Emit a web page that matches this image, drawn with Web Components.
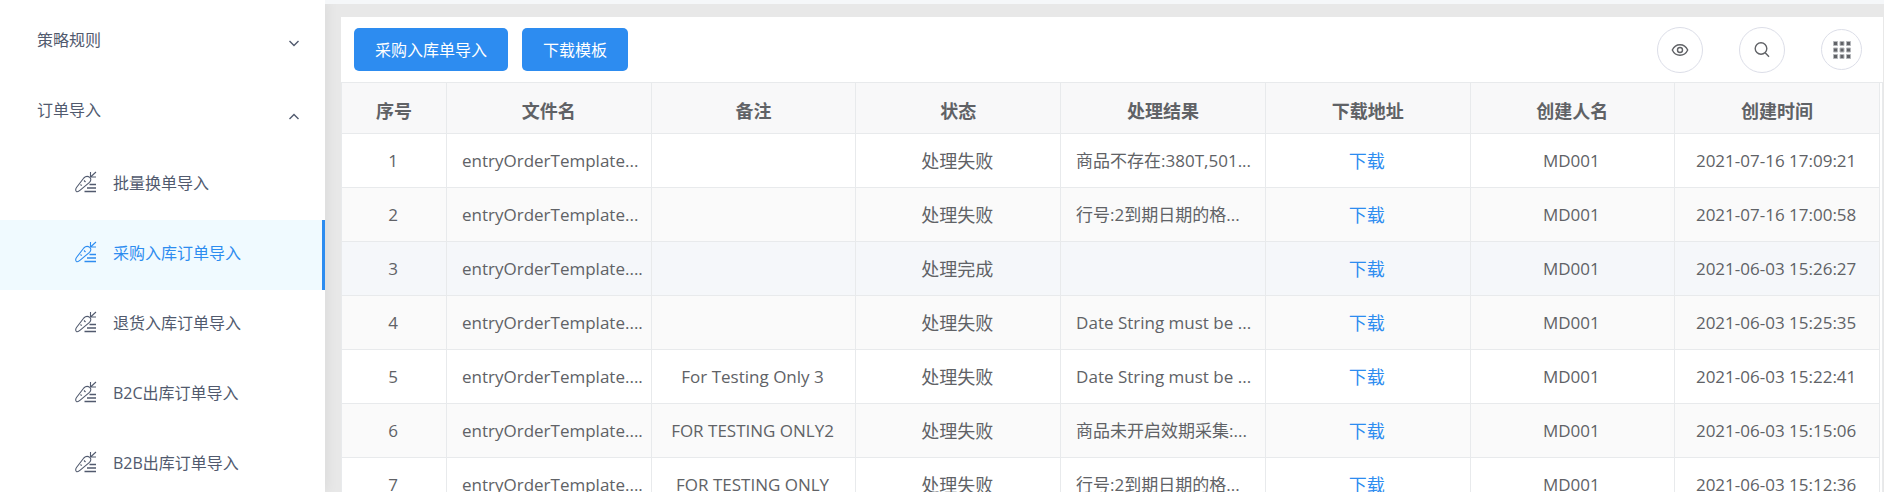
<!DOCTYPE html>
<html lang="zh-CN">
<head>
<meta charset="utf-8">
<meta name="viewport" content="width=device-width, initial-scale=1">
<title>采购入库订单导入</title>
<style>
body {
    margin: 0;
    background-color: #e8e8e8;
    color: #515a6e;
    font-family: "Open Sans", "Noto Sans CJK SC", sans-serif;
    font-size: 16px;
}
</style>
</head>
<body>
<import-page>
    <side-menu slot="menu">
        <menu-group label="策略规则"></menu-group>
        <menu-group label="订单导入" open>
            <menu-link>批量换单导入</menu-link>
            <menu-link active>采购入库订单导入</menu-link>
            <menu-link>退货入库订单导入</menu-link>
            <menu-link>B2C出库订单导入</menu-link>
            <menu-link>B2B出库订单导入</menu-link>
        </menu-group>
    </side-menu>
    <tool-bar>
        <primary-button>采购入库单导入</primary-button>
        <primary-button>下载模板</primary-button>
        <round-button slot="tools" label="显示">
            <svg width="18" height="18" viewBox="0 0 18 18" fill="none" stroke="#606266" stroke-width="1.4"><path d="M1.3 9C3 5.3 5.7 3.7 9 3.7S15 5.3 16.7 9C15 12.7 12.3 14.3 9 14.3S3 12.7 1.3 9Z"/><circle cx="9" cy="9" r="2.5"/></svg>
        </round-button>
        <round-button slot="tools" label="搜索">
            <svg width="18" height="18" viewBox="0 0 18 18" fill="none" stroke="#606266" stroke-width="1.4"><circle cx="8" cy="7.500" r="5.800"/><path d="M12.200 11.700L16 15.700"/></svg>
        </round-button>
        <round-button slot="tools" label="列设置" small>
            <svg width="18" height="18" viewBox="0 0 18 18" fill="#606266" stroke="#b4b6ba" stroke-width="1"><path d="M.5 .5h4v4h-4zM7 .5h4v4h-4zM13.500 .5h4v4h-4zM.5 7h4v4h-4zM7 7h4v4h-4zM13.500 7h4v4h-4zM.5 13.500h4v4h-4zM7 13.500h4v4h-4zM13.500 13.500h4v4h-4z"/></svg>
        </round-button>
    </tool-bar>
    <record-table></record-table>
</import-page>

<script>
class ImportPage extends HTMLElement {
    constructor(){
        super();
        this._sR = this.attachShadow({mode:'open'});
        this._sR.innerHTML =
        `
        <style>
        :host {
            display: flex;
            height: 100vh;
            overflow: hidden;
        }
        .content {
            flex: 1;
            min-width: 0;
            border-top: 4px solid #f5f7f9;
            padding: 13px 1px 0 16px;
        }
        .card {
            background-color: #fff;
        }
        </style>
        <slot name="menu"></slot>
        <main class="content">
            <div class="card"><slot></slot></div>
        </main>
        `;
    }
}
window.customElements.define('import-page', ImportPage);

class SideMenu extends HTMLElement {
    constructor(){
        super();
        this._sR = this.attachShadow({mode:'open'});
        this._sR.innerHTML =
        `
        <style>
        :host {
            display: block;
            flex: none;
            width: 325px;
            background-color: #fff;
            box-shadow: 2px 0 12px rgba(0, 0, 0, 0.06);
        }
        nav {
            padding-top: 10px;
        }
        </style>
        <nav><slot></slot></nav>
        `;
    }
}
window.customElements.define('side-menu', SideMenu);

class MenuGroup extends HTMLElement {
    constructor(){
        super();
        this._sR = this.attachShadow({mode:'open'});
        this._sR.innerHTML =
        `
        <style>
        :host {
            display: block;
        }
        button {
            display: flex;
            justify-content: space-between;
            align-items: center;
            width: 100%;
            height: 70px;
            padding: 0 25px 0 37px;
            border: 0;
            background: none;
            color: inherit;
            font: inherit;
            cursor: pointer;
        }
        span {
            padding-bottom: 12px;
        }
        svg {
            padding-bottom: 4px;
        }
        :host([open]) svg {
            transform: rotate(180deg);
        }
        </style>
        <button type="button">
            <span></span>
            <svg width="12" height="12" viewBox="0 0 12 12" fill="none" stroke="#515a6e" stroke-width="1.4"><path d="M1.5 4L6 8.500L10.500 4"/></svg>
        </button>
        <slot></slot>
        `;
        this.$label = this._sR.querySelector('span');
    }

    static get observedAttributes(){
        return ['label'];
    }

    attributeChangedCallback(name, oldVal, newVal) {
        this.$label.textContent = newVal;
    }
}
window.customElements.define('menu-group', MenuGroup);

class MenuLink extends HTMLElement {
    constructor(){
        super();
        this._sR = this.attachShadow({mode:'open'});
        this._sR.innerHTML =
        `
        <style>
        :host {
            display: block;
        }
        a {
            display: flex;
            align-items: center;
            gap: 16px;
            box-sizing: border-box;
            height: 70px;
            padding: 0 0 6px 75px;
            border-right: 3px solid transparent;
            color: inherit;
            text-decoration: none;
        }
        :host([active]) a {
            background-color: #f0faff;
            border-color: #2d8cf0;
            color: #2d8cf0;
        }
        </style>
        <a href="#">
            <!-- carrot -->
            <svg width="22" height="22" viewBox="0 0 22 22" fill="none" stroke="currentColor" stroke-width="1.1" stroke-linejoin="round">
                <path d="M14.8 6.4C12.8 5 10.600 5.200 8.800 7L1.500 16.500C.3 18.200.500 20.300 1.700 20.700C3 21.100 4 20.300 5.200 19.200L14.500 11.300C16.200 9.600 16.200 7.800 14.800 6.400Z"/>
                <path d="M15.500 1V6H21M15.500 6L21 1M9 9.500L10.500 11M5.500 13.500L6.700 14.700"/>
                <path d="M14.500 13.500H21M12 17H21M9.500 20.500H21" stroke-width="1.3"/>
            </svg>
            <slot></slot>
        </a>
        `;
    }
}
window.customElements.define('menu-link', MenuLink);

class ToolBar extends HTMLElement {
    constructor(){
        super();
        this._sR = this.attachShadow({mode:'open'});
        this._sR.innerHTML =
        `
        <style>
        :host {
            display: flex;
            justify-content: space-between;
            align-items: center;
            height: 65px;
            padding: 0 21px 0 13px;
        }
        div {
            display: flex;
            align-items: center;
            gap: 14px;
        }
        .tools {
            gap: 36px;
        }
        </style>
        <div><slot></slot></div>
        <div class="tools"><slot name="tools"></slot></div>
        `;
    }
}
window.customElements.define('tool-bar', ToolBar);

class PrimaryButton extends HTMLElement {
    constructor(){
        super();
        this._sR = this.attachShadow({mode:'open'});
        this._sR.innerHTML =
        `
        <style>
        :host {
            display: block;
        }
        button {
            display: block;
            height: 43px;
            padding: 0 21px 2px;
            border: 0;
            border-radius: 5px;
            background-color: #2d8cf0;
            color: #fff;
            font: inherit;
            cursor: pointer;
        }
        button:hover {
            background-color: #57a3f3;
        }
        </style>
        <button type="button"><slot></slot></button>
        `;
    }
}
window.customElements.define('primary-button', PrimaryButton);

class RoundButton extends HTMLElement {
    constructor(){
        super();
        this._sR = this.attachShadow({mode:'open'});
        this._sR.innerHTML =
        `
        <style>
        :host {
            display: block;
        }
        button {
            display: flex;
            justify-content: center;
            align-items: center;
            width: 46px;
            height: 46px;
            padding: 0;
            border: 1px solid #dcdee8;
            border-radius: 50%;
            background-color: #fff;
            cursor: pointer;
        }
        :host([small]) button {
            width: 41px;
            height: 41px;
        }
        </style>
        <button type="button"><slot></slot></button>
        `;
    }

    connectedCallback() {
        this._sR.querySelector('button').setAttribute('aria-label', this.getAttribute('label'));
    }
}
window.customElements.define('round-button', RoundButton);

const columns = ['序号', '文件名', '备注', '状态', '处理结果', '下载地址', '创建人名', '创建时间'];
const records = [
    ['entryOrderTemplate...', '', '处理失败', '商品不存在:380T,501...', '2021-07-16 17:09:21'],
    ['entryOrderTemplate...', '', '处理失败', '行号:2到期日期的格...', '2021-07-16 17:00:58'],
    ['entryOrderTemplate....', '', '处理完成', '', '2021-06-03 15:26:27'],
    ['entryOrderTemplate....', '', '处理失败', 'Date String must be ...', '2021-06-03 15:25:35'],
    ['entryOrderTemplate....', 'For Testing Only 3', '处理失败', 'Date String must be ...', '2021-06-03 15:22:41'],
    ['entryOrderTemplate....', 'FOR TESTING ONLY2', '处理失败', '商品未开启效期采集:...', '2021-06-03 15:15:06'],
    ['entryOrderTemplate....', 'FOR TESTING ONLY', '处理失败', '行号:2到期日期的格...', '2021-06-03 15:12:36'],
];

class RecordTable extends HTMLElement {
    constructor(){
        super();
        this._sR = this.attachShadow({mode:'open'});
        this._sR.innerHTML =
        `
        <style>
        :host {
            display: block;
            border: 1px solid #e8eaec;
            border-bottom: 0;
            padding-right: 2px;
            color: #606266;
            font-size: 17px;
        }
        table {
            width: 100%;
            table-layout: fixed;
            border-collapse: separate;
            border-spacing: 0;
        }
        th, td {
            box-sizing: border-box;
            height: 54px;
            padding: 0 2px 0 0;
            border-right: 1px solid #e8eaec;
            border-bottom: 1px solid #e8eaec;
            line-height: 24px;
            text-align: center;
            white-space: nowrap;
        }
        th {
            height: 51px;
            padding: 6px 0 0;
            background-color: #f8f8f9;
            font-size: 18px;
        }
        th:first-child {
            width: 105px;
        }
        td.text {
            padding-left: 15px;
            text-align: left;
        }
        td.cn {
            font-size: 18px;
        }
        tr:nth-child(even) td {
            background-color: #fafafa;
        }
        tr.hover td {
            background-color: #f5f7fa;
        }
        a {
            color: #2d8cf0;
            text-decoration: none;
        }
        </style>
        <table>
            <thead><tr></tr></thead>
            <tbody></tbody>
        </table>
        `;
        this.$head = this._sR.querySelector('thead tr');
        this.$body = this._sR.querySelector('tbody');
    }

    connectedCallback() {
        this.render();
    }

    render() {
        this.$head.innerHTML = columns.map(name => `<th scope="col">${name}</th>`).join('');
        this.$body.innerHTML = records.map(([file, remark, state, result, time], i) => `
            <tr${i === 2 ? ' class="hover"' : ''}>
                <td>${i + 1}</td>
                <td class="text">${file}</td>
                <td>${remark}</td>
                <td class="cn">${state}</td>
                <td class="text">${result}</td>
                <td class="cn"><a href="#">下载</a></td>
                <td>MD001</td>
                <td>${time}</td>
            </tr>`).join('');
    }
}
window.customElements.define('record-table', RecordTable);
</script>
</body>
</html>
